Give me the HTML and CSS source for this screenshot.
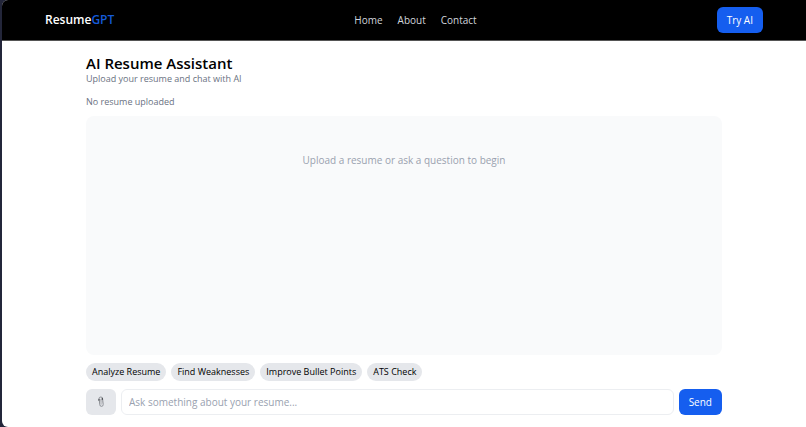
FILE: index.html
```html
<!DOCTYPE html>
<html lang="en">
<head>
    <meta charset="UTF-8">
    <meta name="viewport" content="width=device-width, initial-scale=1.0">
    <title>ResumeGPT</title>
    <link rel="stylesheet" href="styles.css">
</head>
<body>
    <div class="page">
        <header class="navbar">
            <a class="logo" href="#">Resume<span>GPT</span></a>
            <nav class="nav-links">
                <a href="#">Home</a>
                <a href="#">About</a>
                <a href="#">Contact</a>
            </nav>
            <button class="btn" type="button">Try AI</button>
        </header>

        <main class="assistant">
            <h1>AI Resume Assistant</h1>
            <p class="subtitle">Upload your resume and chat with AI</p>
            <p class="status">No resume uploaded</p>

            <div class="chat">
                <p>Upload a resume or ask a question to begin</p>
            </div>

            <div class="chips">
                <button type="button">Analyze Resume</button>
                <button type="button">Find Weaknesses</button>
                <button type="button">Improve Bullet Points</button>
                <button type="button">ATS Check</button>
            </div>

            <form class="composer">
                <button class="attach" type="button" aria-label="Upload resume">
                    <svg viewBox="0 0 8 12" width="8" height="12" fill="none" stroke-linecap="round">
                        <path d="M2 4.2V2.8a1.8 1.8 0 0 1 3.6 0l.6 5.7a1.7 1.7 0 0 1-3.4.3L2.4 5" stroke="#8d9096" stroke-width="1"/>
                        <path d="M3.6 3.6l.6 4.6M4.8 3.2l.4 3" stroke="#a4a6ab" stroke-width=".8"/>
                        <path d="M2 3.4v.8M5.3 2.4v.9" stroke="#45474c" stroke-width="1.2"/>
                    </svg>
                </button>
                <input type="text" aria-label="Question" placeholder="Ask something about your resume...">
                <button class="btn" type="submit">Send</button>
            </form>
        </main>
    </div>
</body>
</html>
```

FILE: styles.css
```css
* {
    box-sizing: border-box;
}

body {
    margin: 0;
    padding-left: 2px;
    background: #23263a;
    font-family: "Open Sans", "Noto Sans", sans-serif;
    font-size: 10px;
    line-height: 16px;
    color: #000;
}

h1,
p {
    margin: 0;
}

a {
    color: inherit;
    text-decoration: none;
}

button,
input {
    font: inherit;
    border: none;
}

button {
    cursor: pointer;
}

.page {
    display: flex;
    flex-direction: column;
    min-height: 100vh;
    background: #fff;
    border-radius: 6px 0 0 6px;
    overflow: hidden;
}

.navbar {
    display: flex;
    justify-content: space-between;
    align-items: center;
    height: 41px;
    padding: 0 43px;
    background: #000;
    color: #fff;
    border-bottom: 1px solid #555;
}

.logo {
    font-size: 12px;
    font-weight: 600;
}

.logo span {
    color: #155ad8;
}

.nav-links {
    display: flex;
    gap: 15px;
    color: #d1d5dc;
}

.btn {
    height: 26px;
    padding: 0 10px;
    background: #155eef;
    color: #fff;
    border-radius: 6px;
}

.assistant {
    flex: 1;
    display: flex;
    flex-direction: column;
    width: 100%;
    max-width: 636px;
    margin: 0 auto;
    padding: 12px 0;
}

h1 {
    font-size: 15px;
    font-weight: 600;
    line-height: 20px;
}

.subtitle,
.status {
    font-size: 9px;
    line-height: 12px;
    color: #6a7282;
}

.status {
    margin: 11px 0 8px;
}

.chat {
    flex: 1;
    padding: 36px 12px;
    background: #f9fafb;
    border-radius: 8px;
    color: #99a1af;
    text-align: center;
}

.chips {
    display: flex;
    flex-wrap: wrap;
    gap: 5px;
    margin: 8px 0;
}

.chips button {
    height: 18px;
    padding: 0 6px;
    background: #e5e7eb;
    border-radius: 9px;
    font-size: 9px;
    line-height: 18px;
}

.composer {
    display: flex;
    gap: 5px;
}

.attach {
    display: flex;
    justify-content: center;
    align-items: center;
    width: 30px;
    height: 26px;
    padding: 0;
    background: #e5e7eb;
    border-radius: 6px;
}

.composer input {
    flex: 1;
    min-width: 0;
    height: 26px;
    padding: 0 7px;
    border: 1px solid #eceef1;
    border-radius: 6px;
}

.composer input::placeholder {
    color: #99a1af;
}
```
